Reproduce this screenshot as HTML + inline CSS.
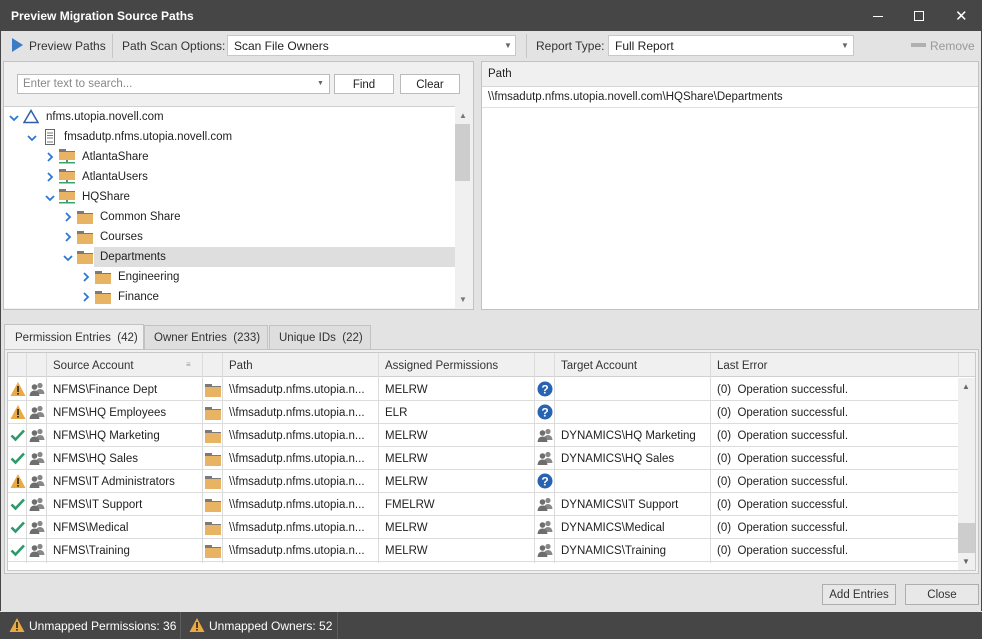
<!DOCTYPE html><html><head><meta charset="utf-8"><style>
*{box-sizing:border-box;margin:0;padding:0}
body{width:982px;height:639px;position:relative;background:#e3e3e3;font-family:"Liberation Sans",sans-serif;font-size:11.5px;color:#222;overflow:hidden}
.a{position:absolute}
.t{position:absolute;white-space:nowrap;margin-top:1px}
.btn{position:absolute;border:1px solid #adadad;background:#f5f5f5;text-align:center;line-height:18px;padding-top:1px}
.cb{position:absolute;background:#fff;border:1px solid #c8c8c8}
.row{position:absolute;left:8px;width:950px;height:23px;border-bottom:1px solid #dcdcdc;background:#fff}
.vl{position:absolute;top:353px;height:210px;width:1px;background:#dcdcdc}
</style></head><body>
<svg width="0" height="0" style="position:absolute"><defs>
<g id="warn"><path d="M8 1 L15.5 15 L0.5 15 Z" fill="#e9a943"/><rect x="7.2" y="5" width="1.6" height="6" fill="#222"/><rect x="7.2" y="12" width="1.6" height="1.6" fill="#222"/></g>
<g id="chk"><path d="M1.5 8.5 L5.5 12.5 L14 3.5" stroke="#2c9a6a" stroke-width="2.6" fill="none"/></g>
<g id="usr"><circle cx="11" cy="4.5" r="2.6" fill="#888"/><path d="M6.5 13 Q7 8 11 8 Q15 8 15.5 13Z" fill="#888"/><circle cx="5.5" cy="6" r="2.8" fill="#6e6e6e"/><path d="M0.5 15 Q1 9.5 5.5 9.5 Q10 9.5 10.5 15Z" fill="#6e6e6e"/></g>
<g id="fld"><rect x="0" y="2" width="7" height="2" fill="#7a7a7a"/><rect x="0" y="4" width="16" height="1" fill="#7a7a7a"/><rect x="0" y="5" width="16" height="10" fill="#e8b463"/></g>
<g id="shr"><rect x="0" y="1" width="7" height="2" fill="#7a7a7a"/><rect x="0" y="3" width="16" height="1" fill="#7a7a7a"/><rect x="0" y="4" width="16" height="8" fill="#e8b463"/><rect x="7" y="12" width="2" height="2" fill="#7a7a7a"/><rect x="0" y="14" width="16" height="1.5" fill="#3aa56a"/></g>
<g id="q"><circle cx="8" cy="8" r="7.5" fill="#2763b0"/><text x="8" y="12.5" text-anchor="middle" font-family="Liberation Sans" font-weight="bold" font-size="12" fill="#fff">?</text></g>
<g id="ar"><path d="M2 1 L6 5 L2 9" stroke="#2b78d6" stroke-width="1.8" fill="none"/></g>
<g id="ad"><path d="M1 2 L5 6 L9 2" stroke="#2b78d6" stroke-width="1.8" fill="none"/></g>
</defs></svg>

<div class="a" style="left:0;top:0;width:982px;height:31px;background:#464646"></div>
<div class="t" style="left:11px;top:8px;color:#fff;font-weight:bold;font-size:12px">Preview Migration Source Paths</div>
<div class="a" style="left:873px;top:16px;width:10px;height:1px;background:#fff"></div>
<div class="a" style="left:914px;top:11px;width:10px;height:10px;border:1px solid #fff"></div>
<div class="t" style="left:955px;top:6px;color:#fff;font-size:15px">✕</div>
<div class="a" style="left:0;top:31px;width:1px;height:580px;background:#464646"></div>
<div class="a" style="left:981px;top:31px;width:1px;height:580px;background:#464646"></div>

<svg class="a" style="left:12px;top:38px" width="12" height="14"><path d="M0 0 L11 7 L0 14Z" fill="#3b7cc4"/></svg>
<div class="t" style="left:29px;top:38px;font-size:12px;color:#333">Preview Paths</div>
<div class="a" style="left:112px;top:34px;width:1px;height:24px;background:#c6c6c6"></div>
<div class="t" style="left:122px;top:38px;font-size:12px;color:#333">Path Scan Options:</div>
<div class="cb" style="left:227px;top:35px;width:289px;height:21px"></div>
<div class="t" style="left:234px;top:38px;font-size:12px">Scan File Owners</div>
<div class="t" style="left:504px;top:40px;font-size:8px;color:#666">▼</div>
<div class="a" style="left:526px;top:34px;width:1px;height:24px;background:#c6c6c6"></div>
<div class="t" style="left:536px;top:38px;font-size:12px;color:#333">Report Type:</div>
<div class="cb" style="left:608px;top:35px;width:246px;height:21px"></div>
<div class="t" style="left:615px;top:38px;font-size:12px">Full Report</div>
<div class="t" style="left:841px;top:40px;font-size:8px;color:#666">▼</div>
<div class="a" style="left:911px;top:43px;width:15px;height:4px;background:#b0b0b0"></div>
<div class="t" style="left:930px;top:38px;font-size:12px;color:#999">Remove</div>

<div class="a" style="left:3px;top:61px;width:471px;height:249px;border:1px solid #c2c2c2;background:#f0f0f0"></div>
<div class="cb" style="left:17px;top:74px;width:313px;height:20px;border-color:#bbb"></div>
<div class="t" style="left:23px;top:77px;color:#888">Enter text to search...</div>
<div class="t" style="left:317px;top:79px;font-size:7px;color:#666">▼</div>
<div class="btn" style="left:334px;top:74px;width:60px;height:20px;background:#fff;border-color:#bbb">Find</div>
<div class="btn" style="left:400px;top:74px;width:60px;height:20px;background:#fff;border-color:#bbb">Clear</div>
<div class="a" style="left:4px;top:106px;width:451px;height:202px;background:#fff;border-top:1px solid #d0d0d0"></div>
<div class="a" style="left:455px;top:106px;width:15px;height:202px;background:#f0f0f0"></div>
<div class="a" style="left:455px;top:124px;width:15px;height:57px;background:#cdcdcd"></div>
<div class="t" style="left:459px;top:110px;font-size:8px;color:#777">▲</div>
<div class="t" style="left:459px;top:294px;font-size:8px;color:#777">▼</div>

<svg class="a" style="left:9px;top:114px" width="10" height="10"><use href="#ad"/></svg>
<svg class="a" style="left:23px;top:109px" width="16" height="15"><path d="M8 1.5 L15 13.5 L1 13.5Z" stroke="#2f5fa8" stroke-width="1.5" fill="none"/></svg>
<div class="t" style="left:46px;top:110px">nfms.utopia.novell.com</div>
<svg class="a" style="left:27px;top:134px" width="10" height="10"><use href="#ad"/></svg>
<svg class="a" style="left:45px;top:129px" width="10" height="16"><rect x="0.5" y="0.5" width="9" height="15" fill="#fff" stroke="#666"/><path d="M2 4h6M2 6.5h6M2 9h6M2 13h6" stroke="#777"/></svg>
<div class="t" style="left:64px;top:130px">fmsadutp.nfms.utopia.novell.com</div>
<svg class="a" style="left:46px;top:152px" width="10" height="10"><use href="#ar"/></svg>
<svg class="a" style="left:59px;top:148px" width="16" height="16"><use href="#shr"/></svg>
<div class="t" style="left:82px;top:150px">AtlantaShare</div>
<svg class="a" style="left:46px;top:172px" width="10" height="10"><use href="#ar"/></svg>
<svg class="a" style="left:59px;top:168px" width="16" height="16"><use href="#shr"/></svg>
<div class="t" style="left:82px;top:170px">AtlantaUsers</div>
<svg class="a" style="left:45px;top:194px" width="10" height="10"><use href="#ad"/></svg>
<svg class="a" style="left:59px;top:188px" width="16" height="16"><use href="#shr"/></svg>
<div class="t" style="left:82px;top:190px">HQShare</div>
<svg class="a" style="left:64px;top:212px" width="10" height="10"><use href="#ar"/></svg>
<svg class="a" style="left:77px;top:209px" width="16" height="16"><use href="#fld"/></svg>
<div class="t" style="left:100px;top:210px">Common Share</div>
<svg class="a" style="left:64px;top:232px" width="10" height="10"><use href="#ar"/></svg>
<svg class="a" style="left:77px;top:229px" width="16" height="16"><use href="#fld"/></svg>
<div class="t" style="left:100px;top:230px">Courses</div>
<div class="a" style="left:94px;top:247px;width:361px;height:20px;background:#dedede"></div>
<svg class="a" style="left:63px;top:254px" width="10" height="10"><use href="#ad"/></svg>
<svg class="a" style="left:77px;top:249px" width="16" height="16"><use href="#fld"/></svg>
<div class="t" style="left:100px;top:250px">Departments</div>
<svg class="a" style="left:82px;top:272px" width="10" height="10"><use href="#ar"/></svg>
<svg class="a" style="left:95px;top:269px" width="16" height="16"><use href="#fld"/></svg>
<div class="t" style="left:118px;top:270px">Engineering</div>
<svg class="a" style="left:82px;top:292px" width="10" height="10"><use href="#ar"/></svg>
<svg class="a" style="left:95px;top:289px" width="16" height="16"><use href="#fld"/></svg>
<div class="t" style="left:118px;top:290px">Finance</div>

<div class="a" style="left:481px;top:61px;width:498px;height:249px;border:1px solid #c2c2c2;background:#fff"></div>
<div class="a" style="left:482px;top:62px;width:496px;height:25px;background:#f0f0f0;border-bottom:1px solid #d6d6d6"></div>
<div class="t" style="left:488px;top:67px">Path</div>
<div class="a" style="left:482px;top:107px;width:496px;height:1px;background:#e0e0e0"></div>
<div class="t" style="left:488px;top:90px">\\fmsadutp.nfms.utopia.novell.com\HQShare\Departments</div>

<div class="a" style="left:4px;top:324px;width:140px;height:28px;background:#f0f0f0;border:1px solid #c2c2c2;border-bottom:none"></div>
<div class="t" style="left:15px;top:331px;color:#333">Permission Entries &nbsp;(42)</div>
<div class="a" style="left:144px;top:325px;width:124px;height:25px;background:#dedede;border:1px solid #c2c2c2"></div>
<div class="t" style="left:154px;top:331px;color:#333">Owner Entries &nbsp;(233)</div>
<div class="a" style="left:269px;top:325px;width:102px;height:25px;background:#dedede;border:1px solid #c2c2c2"></div>
<div class="t" style="left:279px;top:331px;color:#333">Unique IDs &nbsp;(22)</div>

<div class="a" style="left:4px;top:349px;width:975px;height:225px;border:1px solid #c2c2c2;background:#f0f0f0"></div>
<div class="a" style="left:7px;top:352px;width:969px;height:219px;border:1px solid #c8c8c8;background:#fff"></div>
<div class="a" style="left:8px;top:353px;width:967px;height:24px;background:#f0f0f0;border-bottom:1px solid #d0d0d0"></div>
<div class="t" style="left:53px;top:359px;color:#333">Source Account</div>
<div class="t" style="left:186px;top:359px;font-size:8px;color:#999">≡</div>
<div class="t" style="left:229px;top:359px;color:#333">Path</div>
<div class="t" style="left:385px;top:359px;color:#333">Assigned Permissions</div>
<div class="t" style="left:561px;top:359px;color:#333">Target Account</div>
<div class="t" style="left:717px;top:359px;color:#333">Last Error</div>

<div class="row" style="top:378px"></div><div class="row" style="top:401px"></div><div class="row" style="top:424px"></div><div class="row" style="top:447px"></div><div class="row" style="top:470px"></div><div class="row" style="top:493px"></div><div class="row" style="top:516px"></div><div class="row" style="top:539px"></div>

<div class="vl" style="left:26px"></div><div class="vl" style="left:46px"></div><div class="vl" style="left:202px"></div><div class="vl" style="left:222px"></div><div class="vl" style="left:378px"></div><div class="vl" style="left:534px"></div><div class="vl" style="left:554px"></div><div class="vl" style="left:710px"></div><div class="vl" style="left:958px;height:24px"></div>

<div class="a" style="left:958px;top:378px;width:17px;height:192px;background:#f0f0f0"></div>
<div class="a" style="left:958px;top:523px;width:17px;height:30px;background:#cdcdcd"></div>
<div class="t" style="left:962px;top:381px;font-size:8px;color:#666">▲</div>
<div class="t" style="left:962px;top:556px;font-size:8px;color:#666">▼</div>

<div class="a" style="left:0;top:378px">
<svg class="a" style="left:10px;top:3px" width="16" height="16"><use href="#warn"/></svg>
<svg class="a" style="left:29px;top:3px" width="16" height="16"><use href="#usr"/></svg>
<div class="t" style="left:53px;top:5px">NFMS\Finance Dept</div>
<svg class="a" style="left:205px;top:4px" width="16" height="16"><use href="#fld"/></svg>
<div class="t" style="left:229px;top:5px">\\fmsadutp.nfms.utopia.n...</div>
<div class="t" style="left:385px;top:5px">MELRW</div>
<svg class="a" style="left:537px;top:3px" width="16" height="16"><use href="#q"/></svg>
<div class="t" style="left:717px;top:5px">(0) &nbsp;Operation successful.</div>
</div>
<div class="a" style="left:0;top:401px">
<svg class="a" style="left:10px;top:3px" width="16" height="16"><use href="#warn"/></svg>
<svg class="a" style="left:29px;top:3px" width="16" height="16"><use href="#usr"/></svg>
<div class="t" style="left:53px;top:5px">NFMS\HQ Employees</div>
<svg class="a" style="left:205px;top:4px" width="16" height="16"><use href="#fld"/></svg>
<div class="t" style="left:229px;top:5px">\\fmsadutp.nfms.utopia.n...</div>
<div class="t" style="left:385px;top:5px">ELR</div>
<svg class="a" style="left:537px;top:3px" width="16" height="16"><use href="#q"/></svg>
<div class="t" style="left:717px;top:5px">(0) &nbsp;Operation successful.</div>
</div>
<div class="a" style="left:0;top:424px">
<svg class="a" style="left:10px;top:3px" width="16" height="16"><use href="#chk"/></svg>
<svg class="a" style="left:29px;top:3px" width="16" height="16"><use href="#usr"/></svg>
<div class="t" style="left:53px;top:5px">NFMS\HQ Marketing</div>
<svg class="a" style="left:205px;top:4px" width="16" height="16"><use href="#fld"/></svg>
<div class="t" style="left:229px;top:5px">\\fmsadutp.nfms.utopia.n...</div>
<div class="t" style="left:385px;top:5px">MELRW</div>
<svg class="a" style="left:537px;top:3px" width="16" height="16"><use href="#usr"/></svg>
<div class="t" style="left:561px;top:5px">DYNAMICS\HQ Marketing</div>
<div class="t" style="left:717px;top:5px">(0) &nbsp;Operation successful.</div>
</div>
<div class="a" style="left:0;top:447px">
<svg class="a" style="left:10px;top:3px" width="16" height="16"><use href="#chk"/></svg>
<svg class="a" style="left:29px;top:3px" width="16" height="16"><use href="#usr"/></svg>
<div class="t" style="left:53px;top:5px">NFMS\HQ Sales</div>
<svg class="a" style="left:205px;top:4px" width="16" height="16"><use href="#fld"/></svg>
<div class="t" style="left:229px;top:5px">\\fmsadutp.nfms.utopia.n...</div>
<div class="t" style="left:385px;top:5px">MELRW</div>
<svg class="a" style="left:537px;top:3px" width="16" height="16"><use href="#usr"/></svg>
<div class="t" style="left:561px;top:5px">DYNAMICS\HQ Sales</div>
<div class="t" style="left:717px;top:5px">(0) &nbsp;Operation successful.</div>
</div>
<div class="a" style="left:0;top:470px">
<svg class="a" style="left:10px;top:3px" width="16" height="16"><use href="#warn"/></svg>
<svg class="a" style="left:29px;top:3px" width="16" height="16"><use href="#usr"/></svg>
<div class="t" style="left:53px;top:5px">NFMS\IT Administrators</div>
<svg class="a" style="left:205px;top:4px" width="16" height="16"><use href="#fld"/></svg>
<div class="t" style="left:229px;top:5px">\\fmsadutp.nfms.utopia.n...</div>
<div class="t" style="left:385px;top:5px">MELRW</div>
<svg class="a" style="left:537px;top:3px" width="16" height="16"><use href="#q"/></svg>
<div class="t" style="left:717px;top:5px">(0) &nbsp;Operation successful.</div>
</div>
<div class="a" style="left:0;top:493px">
<svg class="a" style="left:10px;top:3px" width="16" height="16"><use href="#chk"/></svg>
<svg class="a" style="left:29px;top:3px" width="16" height="16"><use href="#usr"/></svg>
<div class="t" style="left:53px;top:5px">NFMS\IT Support</div>
<svg class="a" style="left:205px;top:4px" width="16" height="16"><use href="#fld"/></svg>
<div class="t" style="left:229px;top:5px">\\fmsadutp.nfms.utopia.n...</div>
<div class="t" style="left:385px;top:5px">FMELRW</div>
<svg class="a" style="left:537px;top:3px" width="16" height="16"><use href="#usr"/></svg>
<div class="t" style="left:561px;top:5px">DYNAMICS\IT Support</div>
<div class="t" style="left:717px;top:5px">(0) &nbsp;Operation successful.</div>
</div>
<div class="a" style="left:0;top:516px">
<svg class="a" style="left:10px;top:3px" width="16" height="16"><use href="#chk"/></svg>
<svg class="a" style="left:29px;top:3px" width="16" height="16"><use href="#usr"/></svg>
<div class="t" style="left:53px;top:5px">NFMS\Medical</div>
<svg class="a" style="left:205px;top:4px" width="16" height="16"><use href="#fld"/></svg>
<div class="t" style="left:229px;top:5px">\\fmsadutp.nfms.utopia.n...</div>
<div class="t" style="left:385px;top:5px">MELRW</div>
<svg class="a" style="left:537px;top:3px" width="16" height="16"><use href="#usr"/></svg>
<div class="t" style="left:561px;top:5px">DYNAMICS\Medical</div>
<div class="t" style="left:717px;top:5px">(0) &nbsp;Operation successful.</div>
</div>
<div class="a" style="left:0;top:539px">
<svg class="a" style="left:10px;top:3px" width="16" height="16"><use href="#chk"/></svg>
<svg class="a" style="left:29px;top:3px" width="16" height="16"><use href="#usr"/></svg>
<div class="t" style="left:53px;top:5px">NFMS\Training</div>
<svg class="a" style="left:205px;top:4px" width="16" height="16"><use href="#fld"/></svg>
<div class="t" style="left:229px;top:5px">\\fmsadutp.nfms.utopia.n...</div>
<div class="t" style="left:385px;top:5px">MELRW</div>
<svg class="a" style="left:537px;top:3px" width="16" height="16"><use href="#usr"/></svg>
<div class="t" style="left:561px;top:5px">DYNAMICS\Training</div>
<div class="t" style="left:717px;top:5px">(0) &nbsp;Operation successful.</div>
</div>

<div class="btn" style="left:822px;top:584px;width:74px;height:21px;background:#e8e8e8;color:#333">Add Entries</div>
<div class="btn" style="left:905px;top:584px;width:74px;height:21px;background:#e8e8e8;color:#333">Close</div>

<div class="a" style="left:0;top:612px;width:982px;height:27px;background:#464646"></div>
<div class="a" style="left:180px;top:612px;width:1px;height:27px;background:#5e5e5e"></div>
<div class="a" style="left:337px;top:612px;width:1px;height:27px;background:#5e5e5e"></div>
<svg class="a" style="left:9px;top:617px" width="16" height="16"><use href="#warn"/></svg>
<div class="t" style="left:29px;top:618px;color:#fff;font-size:12px">Unmapped Permissions: 36</div>
<svg class="a" style="left:189px;top:617px" width="16" height="16"><use href="#warn"/></svg>
<div class="t" style="left:209px;top:618px;color:#fff;font-size:12px">Unmapped Owners: 52</div>
</body></html>
